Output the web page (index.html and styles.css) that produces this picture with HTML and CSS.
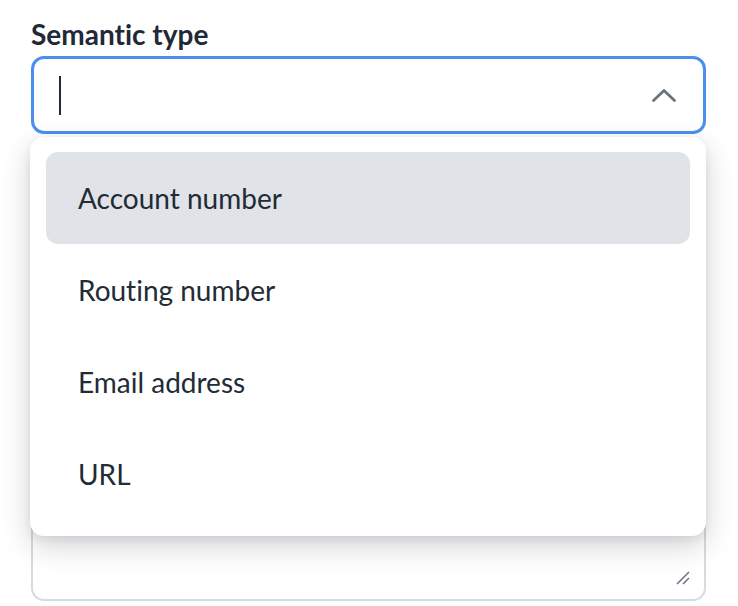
FILE: index.html
```html
<!DOCTYPE html>
<html>
<head>
<meta charset="utf-8">
<link rel="stylesheet" href="styles.css">
</head>
<body>
<div class="field">
  <label class="label">Semantic type</label>
  <div class="combo">
    <div class="input">
      <span class="caret"></span>
      <svg class="chevron" width="26" height="16" viewBox="0 0 26 16"><path d="M2.5 13.5 L13 3.5 L23.5 13.5" fill="none" stroke="#6b7280" stroke-width="2.8" stroke-linecap="round" stroke-linejoin="round"/></svg>
    </div>
    <div class="textarea">
      <svg class="grip" width="14" height="14" viewBox="0 0 14 14"><path d="M1 13 L13 1 M7 13 L13 7" stroke="#6b7280" stroke-width="1.5"/></svg>
    </div>
    <ul class="menu">
      <li class="item active">Account number</li>
      <li class="item">Routing number</li>
      <li class="item">Email address</li>
      <li class="item">URL</li>
    </ul>
  </div>
</div>
</body>
</html>
```
FILE: styles.css
```css
html, body {
  margin: 0;
  padding: 0;
  background: #ffffff;
  font-family: Lato, "Open Sans", sans-serif;
  font-variant-ligatures: none;
  color: #1f2937;
}
.field {
  padding: 16px 32px 0 31px;
  width: 675px;
}
.label {
  display: block;
  font-size: 28px;
  font-weight: 700;
  line-height: 36px;
  margin-bottom: 4px;
  color: #1f2937;
}
.combo {
  position: relative;
}
.input {
  box-sizing: border-box;
  height: 78px;
  border: 3px solid #4a90ee;
  border-radius: 13px;
  display: flex;
  align-items: center;
  justify-content: space-between;
  padding: 0 26px 0 25px;
  background: #fff;
}
.caret {
  width: 2px;
  height: 39px;
  background: #1f2937;
}
.chevron {
  display: block;
}
.textarea {
  box-sizing: border-box;
  margin-top: 30px;
  height: 437px;
  border: 2px solid #d7dbe0;
  border-radius: 13px;
  background: #fff;
  position: relative;
}
.grip {
  position: absolute;
  right: 14px;
  bottom: 14px;
}
.menu {
  position: absolute;
  left: -1px;
  right: 0;
  top: 81px;
  margin: 0;
  padding: 15px 16px 16px;
  list-style: none;
  background: #fff;
  border-radius: 14px;
  box-shadow: 0 10px 30px rgba(17, 24, 39, 0.18), 0 4px 10px rgba(17, 24, 39, 0.08);
}
.item {
  height: 92px;
  display: flex;
  align-items: center;
  padding-left: 32px;
  font-size: 28px;
  border-radius: 12px;
  color: #222b36;
}
.item.active {
  background: #e0e3e8;
}
```
